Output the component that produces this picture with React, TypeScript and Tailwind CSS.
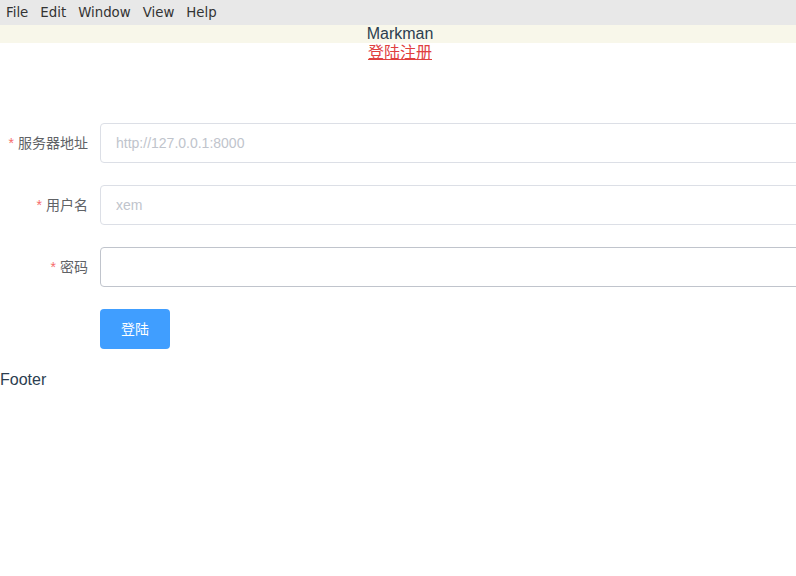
import React from "react";

const labelFont = { fontFamily: '"Liberation Sans", "Noto Sans CJK SC", sans-serif' };

function Row({ label, placeholder, dark }: { label: string; placeholder?: string; dark?: boolean }) {
  return (
    <div className="flex items-center h-[40px] mb-[22px]">
      <div className="w-[100px] shrink-0 pr-[12px] text-right text-[14px] text-[#606266]" style={labelFont}>
        <span className="text-[#f56c6c] mr-[4px]">*</span>
        {label}
      </div>
      <input
        className={`h-[40px] w-[720px] shrink-0 rounded-[4px] border ${dark ? "border-[#c0c4cc]" : "border-[#dcdfe6]"} px-[15px] text-[14px] text-[#606266] outline-none placeholder:text-[#c0c4cc] bg-white`}
        style={labelFont}
        placeholder={placeholder}
      />
    </div>
  );
}

export default function App() {
  return (
    <div className="w-[796px] h-[576px] overflow-hidden bg-white">
      <div
        className="h-[25px] bg-[#e8e8e8] flex items-center pl-[6px] gap-[12px] text-[13.33px] text-[#333]"
        style={{ fontFamily: '"DejaVu Sans", sans-serif' }}
      >
        <span>File</span>
        <span>Edit</span>
        <span>Window</span>
        <span>View</span>
        <span>Help</span>
      </div>
      <div style={{ fontFamily: '"Liberation Sans", "Noto Sans CJK SC", sans-serif' }} className="text-[#2c3e50] w-[800px]">
        <div className="bg-[#f8f7ea] h-[18px] leading-[18px] text-[16px] text-center">Markman</div>
        <div className="text-center h-[19px] leading-[19px] text-[16px]">
          <a className="text-[#e0403f] underline">登陆注册</a>
        </div>
        <div className="mt-[61px]">
          <Row label="服务器地址" placeholder="http://127.0.0.1:8000" />
          <Row label="用户名" placeholder="xem" />
          <Row label="密码" dark />
          <div className="h-[40px] mb-[22px] pl-[100px]">
            <button className="h-[40px] w-[70px] rounded-[4px] bg-[#409eff] text-white text-[14px]" style={labelFont}>
              登陆
            </button>
          </div>
        </div>
        <div className="text-[16px] leading-[18px]">Footer</div>
      </div>
    </div>
  );
}
